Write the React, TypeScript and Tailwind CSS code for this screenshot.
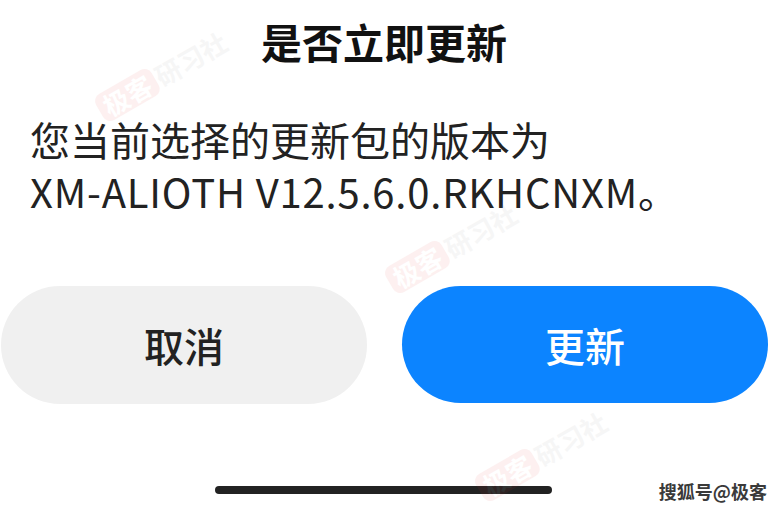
import React from "react";

const cjk = '"Noto Sans CJK SC", "Noto Sans", sans-serif';

function Watermark({ x, y }: { x: number; y: number }) {
  return (
    <div
      className="pointer-events-none absolute flex items-center gap-[2px] -rotate-[30deg] opacity-[0.07]"
      style={{ left: x, top: y }}
    >
      <span className="rounded-[8px] bg-[#e53935] px-[6px] py-[2px] text-[26px] font-bold leading-none text-white">
        极客
      </span>
      <span className="text-[26px] font-bold leading-none text-[#888]">研习社</span>
    </div>
  );
}

export default function App() {
  return (
    <div
      className="relative h-[510px] w-[768px] overflow-hidden bg-white"
      style={{ fontFamily: cjk }}
    >
      <div className="flex h-full flex-col">
        <div className="flex h-[84px] items-center justify-center pb-[2px]">
          <h1 className="text-[41px] font-bold leading-none text-[#111]">是否立即更新</h1>
        </div>
        <div className="px-[30px] pt-[29px] text-[40px] leading-[52px] text-[#222]">
          <div>您当前选择的更新包的版本为</div>
          <div className="tracking-[0.8px]">XM-ALIOTH V12.5.6.0.RKHCNXM。</div>
        </div>
        <div className="mt-[69px] flex gap-[35px] pl-[1px]">
          <button className="flex h-[118px] w-[366px] items-center justify-center rounded-full bg-[#f0f0f0] text-[40px] font-medium text-[#222]">
            取消
          </button>
          <button className="flex h-[117px] w-[366px] items-center justify-center rounded-full bg-[#0c84ff] text-[40px] font-medium text-white">
            更新
          </button>
        </div>
        <div className="mt-[82px] flex justify-center">
          <div className="ml-[-1px] h-[8px] w-[337px] rounded-full bg-[#222]" />
        </div>
      </div>

      <Watermark x={90} y={60} />
      <Watermark x={380} y={232} />
      <Watermark x={470} y={440} />

      <div
        className="absolute bottom-[10px] right-[1px] text-[18px] font-bold leading-none text-[#3a3a3a]"
        style={{ textShadow: "0 0 2px #fff, 0 0 2px #fff" }}
      >
        搜狐号@极客
      </div>
    </div>
  );
}
